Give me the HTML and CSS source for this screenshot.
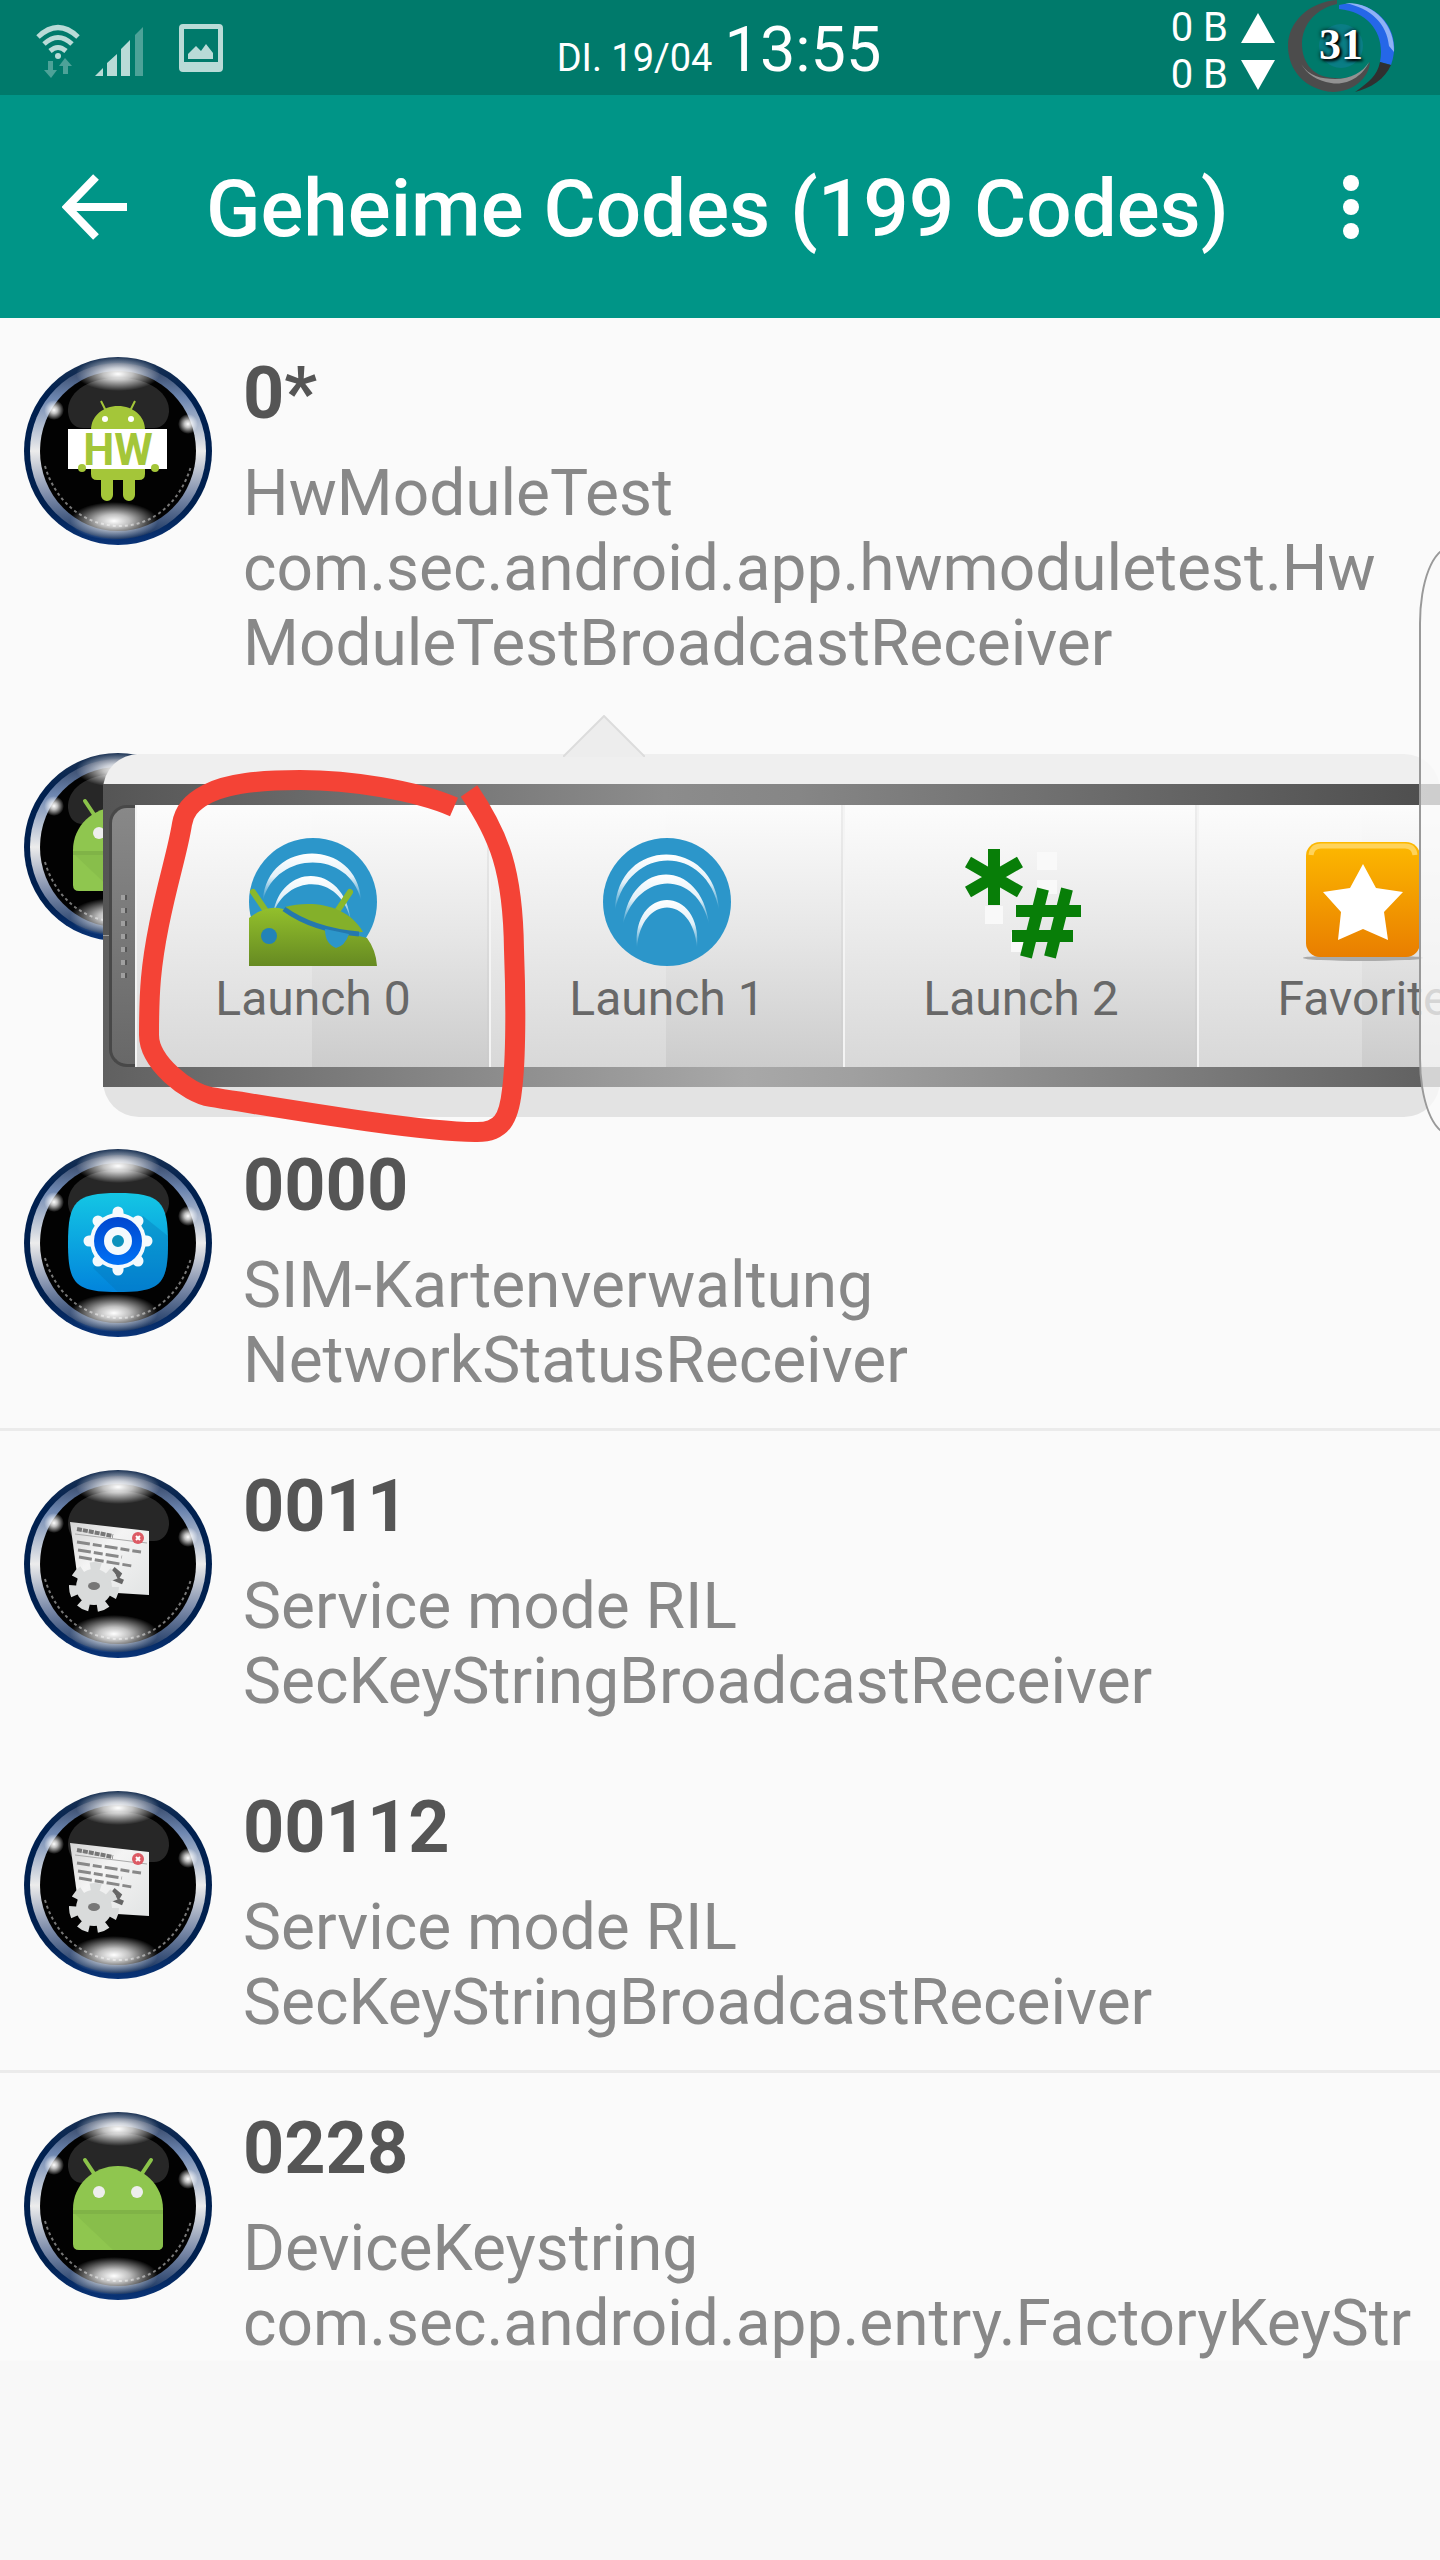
FILE: index.html
```
<!DOCTYPE html>
<html lang="de">
<head>
<meta charset="utf-8">
<meta name="viewport" content="width=device-width, initial-scale=1">
<title>Geheime Codes</title>
<link rel="stylesheet" href="styles.css">
</head>
<body>
<svg class="defs" aria-hidden="true">
  <defs>
    <linearGradient id="rim" x1="0" y1="0" x2="0" y2="1">
      <stop offset="0" stop-color="#1c3354"/><stop offset=".2" stop-color="#00204f"/>
      <stop offset=".8" stop-color="#00204f"/><stop offset="1" stop-color="#0a3478"/>
    </linearGradient>
    <linearGradient id="chrome" x1="0" y1="0" x2="0" y2="1">
      <stop offset="0" stop-color="#2a3a58"/><stop offset=".2" stop-color="#6d86b0"/>
      <stop offset=".5" stop-color="#ececec"/><stop offset=".75" stop-color="#7e8dab"/>
      <stop offset="1" stop-color="#14305c"/>
    </linearGradient>
    <radialGradient id="glow">
      <stop offset="0" stop-color="#fff"/><stop offset=".35" stop-color="#fff" stop-opacity=".75"/>
      <stop offset="1" stop-color="#fff" stop-opacity="0"/>
    </radialGradient>
    <linearGradient id="tile" x1="0" y1="0" x2="0" y2="1">
      <stop offset="0" stop-color="#14c6e4"/><stop offset="1" stop-color="#0284dc"/>
    </linearGradient>
    <linearGradient id="blue" x1="0" y1="0" x2="0" y2="1">
      <stop offset="0" stop-color="#0046cf"/><stop offset="1" stop-color="#0072f5"/>
    </linearGradient>
    <linearGradient id="paper" x1="0" y1="0" x2="1" y2="1">
      <stop offset="0" stop-color="#d4d4d4"/><stop offset=".4" stop-color="#f4f4f4"/><stop offset="1" stop-color="#e2e4e4"/>
    </linearGradient>
    <linearGradient id="arc" x1="0" y1="0" x2="0" y2="1">
      <stop offset="0" stop-color="#fff"/><stop offset=".5" stop-color="#e2f0f8"/><stop offset="1" stop-color="#2c96ca"/>
    </linearGradient>
    <linearGradient id="droid" x1="0" y1="0" x2="0" y2="1">
      <stop offset="0" stop-color="#93c02c"/><stop offset="1" stop-color="#668a22"/>
    </linearGradient>
    <linearGradient id="gold" x1="0" y1="0" x2="0" y2="1">
      <stop offset="0" stop-color="#fdb900"/><stop offset="1" stop-color="#e97e00"/>
    </linearGradient>
    <symbol id="orb" viewBox="0 0 190 190">
      <circle cx="95" cy="95" r="94" fill="url(#rim)"/>
      <circle cx="95" cy="95" r="88" fill="url(#chrome)"/>
      <ellipse cx="95" cy="95" rx="78" ry="80" fill="#020202"/>
      <path d="M45 56C44 38 62 22 95 22S147 38 146 56C145 66 139 72 131 72H60C51 72 46 66 45 56Z" fill="#272727"/>
      <path d="M22 110C32 145 60 169 95 170S158 145 168 110" fill="none" stroke="#aaa" stroke-width="2" stroke-dasharray="3 3" opacity=".7"/>
      <ellipse cx="95" cy="18" rx="42" ry="17" fill="url(#glow)"/>
      <ellipse cx="91" cy="165" rx="44" ry="19" fill="url(#glow)"/>
      <circle cx="31" cy="54" r="10" fill="url(#glow)"/>
      <circle cx="165" cy="68" r="10" fill="url(#glow)"/>
    </symbol>
    <symbol id="robot" viewBox="0 0 190 190">
      <path d="M62 49L74 67M128 49L116 67" stroke="#8bc34a" stroke-width="4" stroke-linecap="round"/>
      <path d="M50 98C50 74 70 55 95 55S140 74 140 98V133Q140 139 134 139H56Q50 139 50 133Z" fill="#8fc64f"/>
      <path d="M50 99H140V103H50Z" fill="#80b347"/>
      <path d="M52 103L90 139H134Q140 139 140 133V103Z" fill="#88be4b"/>
      <circle cx="76" cy="81" r="6" fill="#eee"/><circle cx="114" cy="81" r="6" fill="#eee"/>
    </symbol>
    <symbol id="service" viewBox="0 0 190 190">
      <path d="M47 53L126 62V126L94 124L55 112Z" fill="url(#paper)"/>
      <path d="M52 65L124 74" stroke="#aaa" stroke-width="1"/>
      <path d="M54 60L90 67" stroke="#777" stroke-width="4" stroke-dasharray="5 1"/>
      <path d="M54 73L118 83M55 81L99 88M56 88L109 97" stroke="#888" stroke-width="3" stroke-dasharray="13 3 9 3"/>
      <circle cx="115" cy="69" r="6" fill="#dc5a64"/><path d="M113 67L117 71M117 67L113 71" stroke="#fff" stroke-width="2"/>
      <path d="M90 100l6 5-3 5 7 3" stroke="#666" stroke-width="5" fill="none"/>
      <circle cx="71" cy="118" r="18" fill="#d9dbdb"/>
      <circle cx="71" cy="118" r="20" fill="none" stroke="#d9dbdb" stroke-width="10" stroke-dasharray="10 8"/>
      <ellipse cx="71" cy="117" rx="6" ry="4" fill="#777"/>
    </symbol>
  </defs>
</svg>

<header class="status">
  <div class="status-icons">
    <svg width="46" height="70" viewBox="0 0 46 70" aria-label="WLAN">
      <g fill="none" stroke="#b9dbd7" stroke-width="5"><path d="M3 13Q23-6 43 13M9 20Q23 7 37 20M15 27Q23 20 31 27"/></g>
      <circle cx="23" cy="32" r="3" fill="#b9dbd7"/>
      <path d="M13 37h5v9h4l-6 8-7-8h4ZM28 50v-8h-4l6-8 7 8h-4v8Z" fill="#4da298"/>
    </svg>
    <svg width="50" height="50" viewBox="0 0 50 50" aria-label="Signal">
      <path d="M0 50L8 42V50ZM12 37L22 28V50H12ZM26 23L35 14V50H26Z" fill="#b9dbd7"/>
      <path d="M40 9L48 1V50H40Z" fill="#4da298"/>
    </svg>
    <svg class="status-shot" width="44" height="48" viewBox="0 0 44 48" aria-label="Screenshot">
      <path fill-rule="evenodd" d="M4 0H40Q44 0 44 4V44Q44 48 40 48H4Q0 48 0 44V4Q0 0 4 0ZM5 5V38H39V5Z" fill="#b9dbd7"/>
      <path d="M9 35V30L17 22L22 27L27 20L34 29V35Z" fill="#b9dbd7"/>
    </svg>
  </div>
  <div class="clock"><span class="date">DI. 19/04</span><time>13:55</time></div>
  <div class="status-right">
    <div class="traffic">
      <span>0 B <svg width="34" height="30" viewBox="0 0 34 30"><path d="M17 0L34 30H0Z" fill="#fff"/></svg></span>
      <span>0 B <svg width="34" height="30" viewBox="0 0 34 30"><path d="M17 30L34 0H0Z" fill="#fff"/></svg></span>
    </div>
    <div class="battery">
      <svg width="108" height="94" viewBox="0 0 108 94">
        <circle cx="54" cy="46" r="22" fill="#1380a0" opacity=".5"/>
        <path d="M50 0C22 2 1 22 1 46C1 70 18 90 46 92C66 92 82 78 83 62C76 74 62 80 48 78C28 78 15 64 15 44C15 24 30 8 50 4Z" fill="#4c4c4c"/>
        <path d="M82 62C76 76 60 86 44 83C30 81 20 74 14 64C22 76 34 79 48 79C64 79 76 72 82 62Z" fill="#929292"/>
        <path d="M52 5C84-2 110 24 107 52Q106 60 104 65L93 62C98 36 84 12 52 9Z" fill="#2567e8"/>
        <path d="M58 3C88 2 108 26 107 52L102 46C100 24 84 8 58 3Z" fill="#8fb2f6"/>
        <path d="M93 62L104 65C98 79 84 88 68 92C82 82 90 76 93 62Z" fill="#303030"/>
      </svg>
      <span class="battery-value">31</span>
    </div>
  </div>
</header>

<div class="appbar">
  <button class="icon-btn" type="button" aria-label="Zurück">
    <svg width="66" height="66" viewBox="0 0 66 66"><path d="M34 3L5 33L34 63M5 33H65" fill="none" stroke="#fff" stroke-width="8"/></svg>
  </button>
  <h1>Geheime Codes (199 Codes)</h1>
  <button class="icon-btn" type="button" aria-label="Menü">
    <svg width="18" height="66" viewBox="0 0 18 66" fill="#fff"><circle cx="9" cy="9" r="8"/><circle cx="9" cy="33" r="8"/><circle cx="9" cy="57" r="8"/></svg>
  </button>
</div>

<main class="list">
  <article class="row">
    <svg class="orb" viewBox="0 0 190 190">
      <use href="#orb"/>
      <path d="M78 45L83 55M112 45L107 55" stroke="#a4c639" stroke-width="2"/>
      <path d="M68 74C68 60 80 50 95 50S122 60 122 74Z" fill="#a4c639"/>
      <circle cx="82" cy="63" r="3" fill="#fff"/><circle cx="108" cy="63" r="3" fill="#fff"/>
      <path d="M68 110H122V118Q122 124 116 124H112V139a6 6 0 0 1-12 0V124H90V139a6 6 0 0 1-12 0V124H74Q68 124 68 118Z" fill="#a4c639"/>
      <rect x="45" y="73" width="99" height="40" fill="#fff"/>
      <circle cx="59" cy="112" r="4" fill="#a4c639"/><circle cx="132" cy="112" r="4" fill="#a4c639"/>
      <text class="hw" x="95" y="109" text-anchor="middle">HW</text>
    </svg>
    <div class="text">
      <h2>0*</h2>
      <p>HwModuleTest</p>
      <p>com.sec.android.app.hwmoduletest.Hw<br>ModuleTestBroadcastReceiver</p>
    </div>
  </article>

  <article class="row row-open">
    <svg class="orb" viewBox="0 0 190 190"><use href="#orb"/><use href="#robot"/></svg>
    <div class="popup">
      <svg class="arrow" width="82" height="42" viewBox="0 0 82 42"><path d="M0 42L41 1L82 42Z" fill="#ededed"/><path d="M0 42L41 1L82 42" fill="none" stroke="#dcdcdc" stroke-width="2"/></svg>
      <div class="rail">
        <div class="grip"><i></i><i></i><i></i><i></i><i></i><i></i><i></i></div>
        <button class="action" type="button">
          <svg width="128" height="128" viewBox="0 0 128 128">
            <circle cx="64" cy="64" r="64" fill="#2c96ca"/>
            <path d="M14 62C18 0 108 0 112 62C100 12 28 12 14 62Z" fill="url(#arc)"/>
            <path d="M24 76C32 24 96 24 102 84C92 34 38 36 24 76Z" fill="url(#arc)"/>
            <path d="M4 54L17 73M101 54L89 72" stroke="#8ab82c" stroke-width="6" stroke-linecap="round"/>
            <path d="M0 80Q18 66 34 71Q60 90 106 97L118 100Q127 112 128 128H0Z" fill="url(#droid)"/>
            <path d="M36 69C62 62 98 66 114 94C86 96 54 88 36 69Z" fill="#84b02a"/>
            <path d="M35 71Q64 92 110 96" fill="none" stroke="#2478ae" stroke-width="5"/>
            <circle cx="20" cy="98" r="8" fill="#2383b8"/>
            <path d="M76 91L100 96Q96 108 87 110Q76 106 76 91Z" fill="#2c96ca"/>
          </svg>
          Launch 0
        </button>
        <button class="action" type="button">
          <svg width="128" height="128" viewBox="0 0 128 128">
            <circle cx="64" cy="64" r="64" fill="#2c96ca"/>
            <path d="M12 72C14-2 112-2 116 72C104 6 26 6 12 72Z" fill="url(#arc)"/>
            <path d="M20 86C28 20 98 20 106 86C94 32 36 32 20 86Z" fill="url(#arc)"/>
            <path d="M34 110C28 46 100 46 94 110C90 56 38 56 34 110Z" fill="url(#arc)"/>
          </svg>
          Launch 1
        </button>
        <button class="action" type="button">
          <svg width="128" height="128" viewBox="0 0 128 128">
            <path d="M80 14H100V32H80ZM80 42H100V56H80ZM28 68H46V86H28ZM54 94H66V114H54Z" fill="#f9f9f9"/>
            <path d="M37 11V67M11 24L63 54M63 24L11 54" stroke="#087e08" stroke-width="12"/>
            <path d="M86 51L69 119M110 51L93 119M59 73H124M55 98H116" stroke="#087e08" stroke-width="12"/>
          </svg>
          Launch 2
        </button>
        <button class="action action-last" type="button">
          <svg width="128" height="128" viewBox="0 0 128 128">
            <ellipse cx="64" cy="120" rx="60" ry="3" fill="#aaa"/>
            <rect x="7" y="4" width="114" height="115" rx="14" fill="url(#gold)"/>
            <path d="M12 17Q13 8 22 8H106Q115 8 116 17" fill="none" stroke="#ffd35a" stroke-width="5"/>
            <path d="M64 26L77 50L104 54L85 74L89 102L64 91L39 102L42 74L24 54L51 50Z" fill="#fff"/>
          </svg>
          Favorite
        </button>
      </div>
    </div>
    <svg class="marker" width="400" height="400" viewBox="130 760 400 400" aria-hidden="true">
      <path d="M454 807C415 790 350 780 300 780C260 780 228 783 207 794C190 803 184 812 182 824C178 850 168 880 159 925C151 965 149 990 149 1035C149 1062 187 1093 211 1097C280 1108 420 1132 475 1132C502 1133 509 1118 512 1090C516 1060 516 1000 514 950C513 870 499 835 469 791" fill="none" stroke="#f44336" stroke-width="20"/>
    </svg>
    <div class="edge"></div>
  </article>

  <article class="row ruled">
    <svg class="orb" viewBox="0 0 190 190">
      <use href="#orb"/>
      <path d="M95 45C137 45 145 53 145 95S137 144 95 144S45 137 45 95S53 45 95 45Z" fill="url(#tile)"/>
      <path d="M120 68L145 88V95C145 137 137 144 95 144L70 120Z" fill="#0672b4" opacity=".35"/>
      <g stroke="#f4fafd" stroke-width="11" stroke-linecap="round"><path d="M95 64V122M66 93H124M75 73L115 113M115 73L75 113"/></g>
      <circle cx="95" cy="93" r="28" fill="#f4fafd"/>
      <circle cx="95" cy="93" r="24" fill="url(#blue)"/>
      <circle cx="95" cy="93" r="10" fill="#0d92bc" stroke="#f4fafd" stroke-width="8"/>
    </svg>
    <div class="text"><h2>0000</h2><p>SIM-Kartenverwaltung</p><p>NetworkStatusReceiver</p></div>
  </article>

  <article class="row">
    <svg class="orb" viewBox="0 0 190 190"><use href="#orb"/><use href="#service"/></svg>
    <div class="text"><h2>0011</h2><p>Service mode RIL</p><p>SecKeyStringBroadcastReceiver</p></div>
  </article>

  <article class="row ruled">
    <svg class="orb" viewBox="0 0 190 190"><use href="#orb"/><use href="#service"/></svg>
    <div class="text"><h2>00112</h2><p>Service mode RIL</p><p>SecKeyStringBroadcastReceiver</p></div>
  </article>

  <article class="row row-cut">
    <svg class="orb" viewBox="0 0 190 190"><use href="#orb"/><use href="#robot"/></svg>
    <div class="text"><h2>0228</h2><p>DeviceKeystring</p><p>com.sec.android.app.entry.FactoryKeyStr</p></div>
  </article>
</main>
</body>
</html>
```
FILE: styles.css
```
* { box-sizing: border-box; }

body {
  margin: 0;
  min-height: 100vh;
  overflow-x: hidden;
  background: #f8f8f8;
  font-family: Roboto, "Liberation Sans", sans-serif;
}

h1, h2, p { margin: 0; font-weight: normal; }

button {
  margin: 0;
  padding: 0;
  border: 0;
  background: none;
  font: inherit;
  color: inherit;
}

svg { display: block; flex: none; }

.defs { position: absolute; width: 0; height: 0; }

/* status bar */
.status {
  display: grid;
  grid-template-columns: 1fr auto 1fr;
  height: 95px;
  background: #007a6b;
  color: #fff;
}

.status-icons {
  display: flex;
  align-items: flex-start;
  gap: 14px;
  padding: 24px 0 0 35px;
}

.status-icons svg + svg { margin-top: 2px; }

.status-icons .status-shot { margin: 0 0 0 20px; }

.clock {
  display: flex;
  align-items: baseline;
  gap: 12px;
  padding-right: 2px;
  font-size: 63px;
  line-height: 100px;
}

.date { font-size: 38px; }

.status-right {
  display: flex;
  justify-content: flex-end;
  gap: 12px;
  padding-right: 45px;
}

.traffic {
  display: flex;
  flex-direction: column;
  padding-top: 4px;
  font-size: 40px;
  line-height: 47px;
}

.traffic span {
  display: flex;
  align-items: center;
  gap: 13px;
}

.battery { position: relative; }

.battery-value {
  position: absolute;
  inset: 0;
  text-align: center;
  font: bold 44px/90px "Liberation Serif", serif;
  text-shadow: 0 0 4px #000, 2px 2px 3px #000;
}

/* title bar */
.appbar {
  display: flex;
  align-items: center;
  height: 223px;
  padding: 0 80px 0 62px;
  background: #009587;
  color: #fff;
}

.appbar h1 {
  flex: 1;
  padding: 4px 0 0 78px;
  font-size: 80px;
  font-weight: 500;
  line-height: 94px;
  white-space: nowrap;
}

/* code list */
.list { background: #fafafa; }

.row {
  position: relative;
  display: flex;
  gap: 30px;
  padding: 38px 0 33px 23px;
}

.ruled { border-bottom: 3px solid #ebebeb; padding-bottom: 30px; }

.row-cut { padding-bottom: 0; }

.row-open { min-height: 396px; }

.orb { width: 190px; height: 190px; }

.hw { font: bold 44px Roboto, sans-serif; fill: #a4c639; }

.text { white-space: nowrap; }

.text h2 {
  padding-bottom: 24px;
  font-size: 72px;
  font-weight: bold;
  line-height: 76px;
  color: #555;
}

.text p {
  font-size: 64px;
  line-height: 75px;
  color: #888;
}

/* quick-action popup over the second row */
.popup {
  position: absolute;
  top: 40px;
  left: 103px;
  right: 0;
  padding: 30px 0;
  border-radius: 36px;
  background: linear-gradient(#efefef 50%, #e3e3e3 50%);
}

.arrow {
  position: absolute;
  top: -39px;
  left: 460px;
}

.rail {
  display: flex;
  overflow: hidden;
  padding: 21px 0 20px 6px;
  background:
    linear-gradient(90deg, #555, #8c8c8c 42%, #868686 52%, #4d4d4d) 0 0 / 100% 50% no-repeat,
    linear-gradient(90deg, #606060, #a8a8a8 48%, #a0a0a0 56%, #606060) 0 100% / 100% 50% no-repeat;
}

.grip {
  flex: none;
  display: flex;
  flex-direction: column;
  align-items: center;
  justify-content: center;
  gap: 8px;
  width: 26px;
  border: 3px solid #484848;
  border-right: 0;
  border-radius: 18px 0 0 18px;
  background: linear-gradient(#888, #686868);
}

.grip i {
  width: 6px;
  height: 5px;
  background: #a0a0a0;
  border-right: 2px solid #555;
}

.action {
  flex: none;
  display: flex;
  flex-direction: column;
  align-items: center;
  gap: 5px;
  width: 354px;
  height: 262px;
  padding: 33px 0 0 2px;
  border-left: 2px solid #f4f4f4;
  border-right: 2px solid rgba(0, 0, 0, .06);
  background:
    linear-gradient(#fcfcfc, #e6e6e6 50%, #cccccc) 100% 0 / 50% 100% no-repeat,
    linear-gradient(#fcfcfc, #d8d8d8);
  font-size: 48px;
  line-height: 56px;
  color: #686868;
}

.action-last { width: 330px; }

/* hand-drawn highlight */
.marker {
  position: absolute;
  top: 46px;
  left: 130px;
}

/* handle of the side panel */
.edge {
  position: absolute;
  top: -167px;
  right: -40px;
  width: 61px;
  height: 588px;
  border: 2px solid #999;
  border-radius: 36px / 90px;
  background: rgba(250, 250, 250, .75);
}
```
